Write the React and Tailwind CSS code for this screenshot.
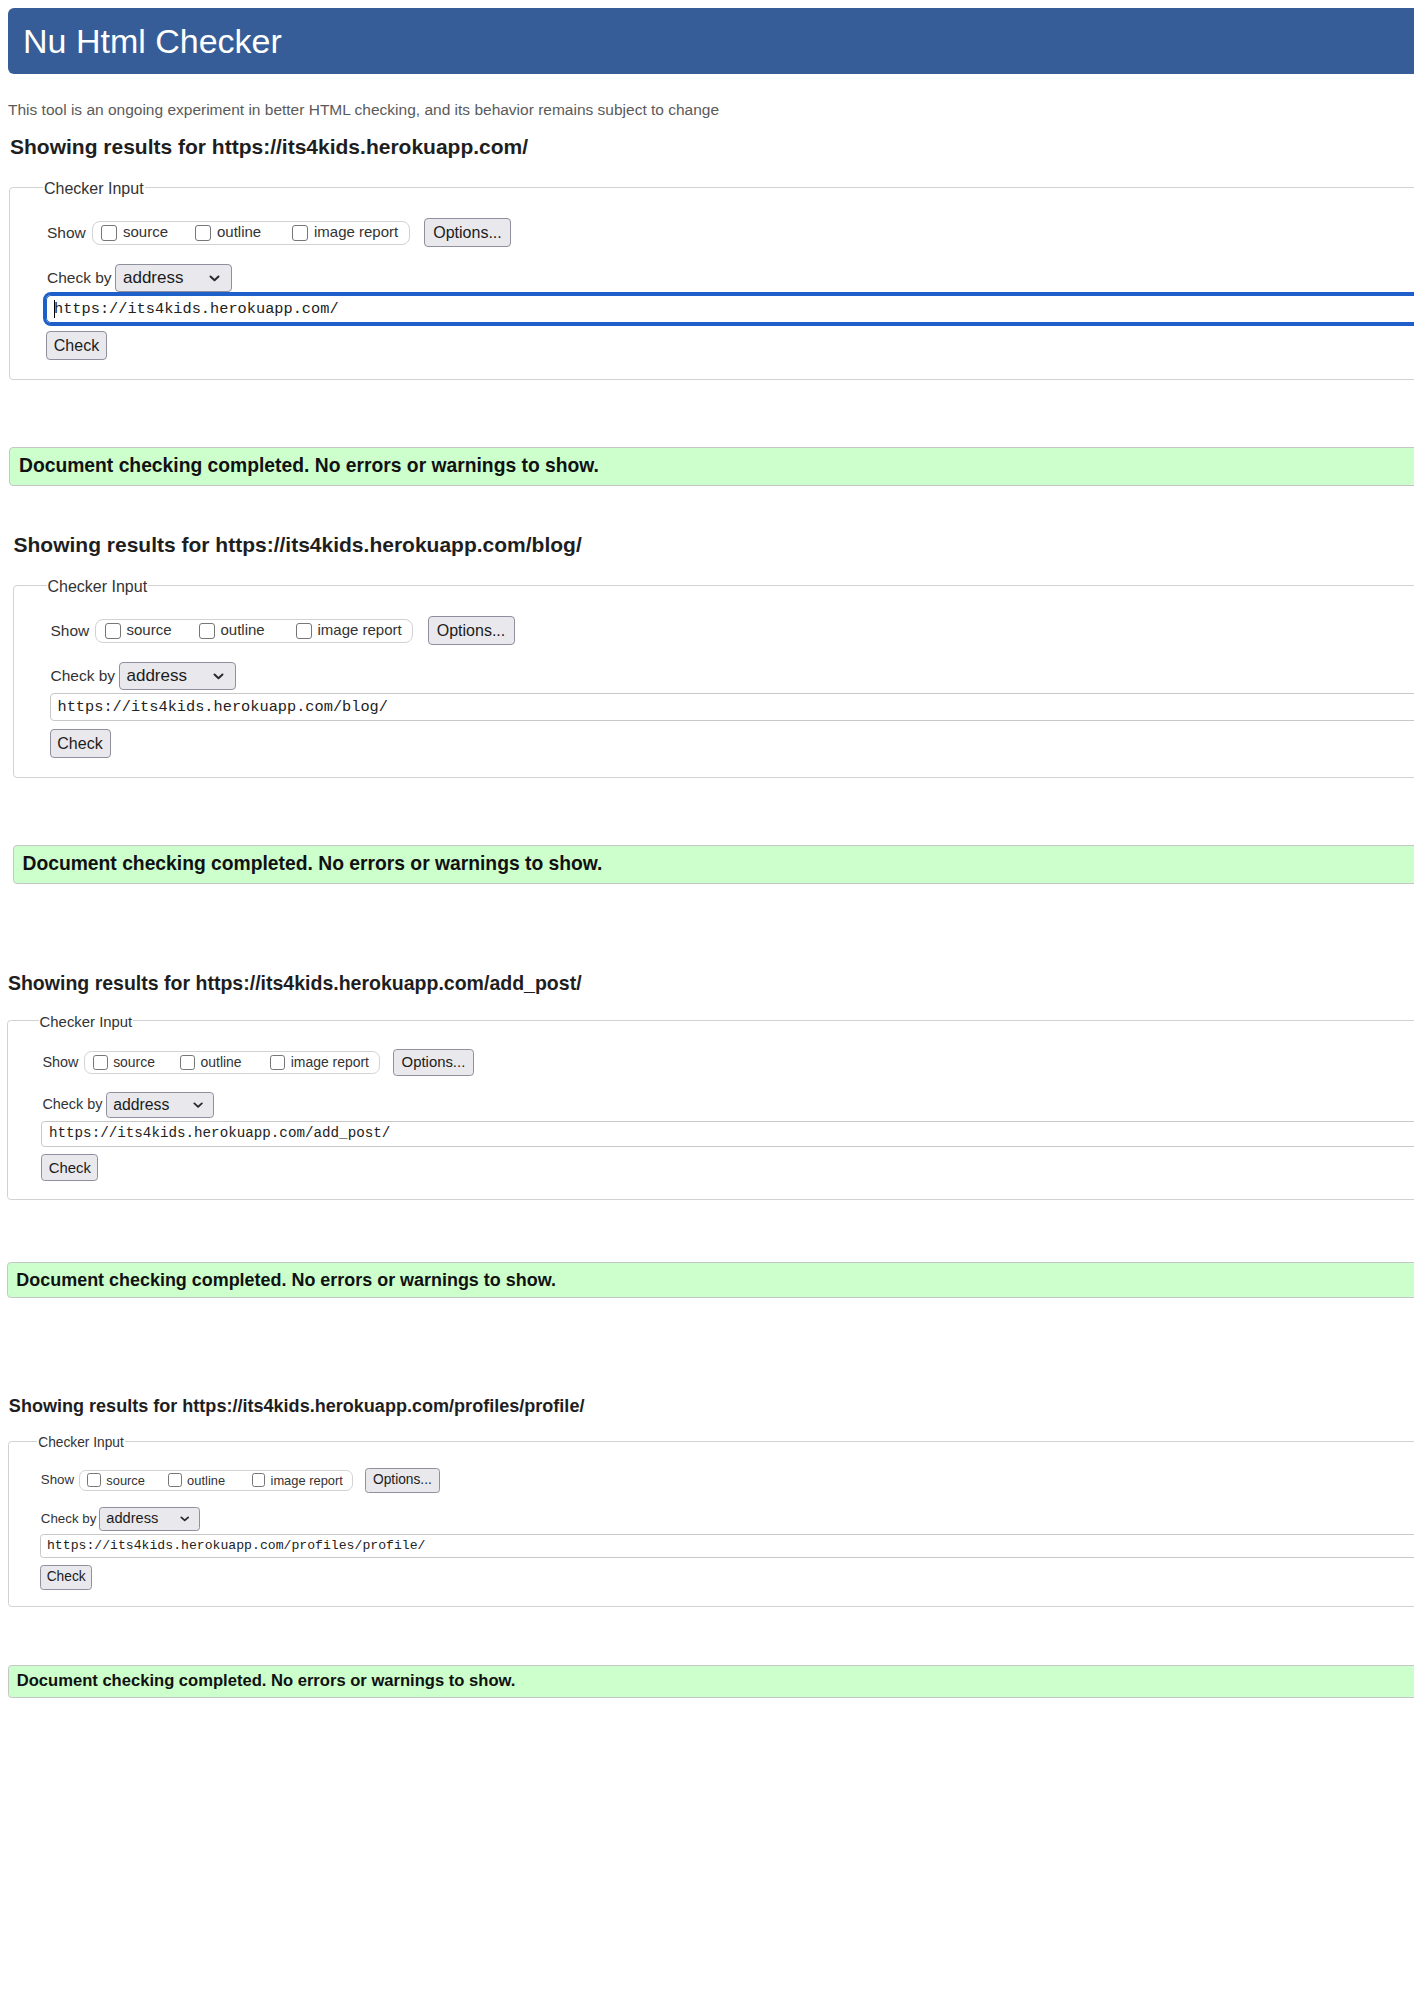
import React from "react";

const SANS = "font-['Liberation_Sans',Arial,sans-serif]";

function Box() {
  return (
    <span className="block h-[16px] w-[16px] shrink-0 rounded-[3px] border-[1.5px] border-[#767676] bg-white" />
  );
}

function Chevron() {
  return (
    <svg width="11" height="7" viewBox="0 0 11 7" className="shrink-0">
      <polyline points="1.5,1.5 5.5,5.2 9.5,1.5" fill="none" stroke="#2a2a2a" strokeWidth="2" strokeLinecap="round" strokeLinejoin="round" />
    </svg>
  );
}

function Checker({ url, focused }) {
  return (
    <fieldset className="w-[1800px] rounded-[4px] border border-[#d2d2d2] pb-[19px]">
      <legend className="ml-[33px] px-[1px] pt-[4px] text-[16px] leading-[18px] text-[#333]">Checker Input</legend>
      <div className="flex flex-col pl-[37px] pt-[20px]">
        <div className="flex h-[29px] items-center">
          <span className="w-[44.5px] text-[15.5px] text-[#333]">Show</span>
          <div className="flex h-[24px] w-[318px] items-center rounded-[8px] border border-[#d2d2d2] pl-[8.5px] text-[15px] text-[#333]">
            <label className="flex w-[94px] items-center gap-[6px]">
              <Box />
              source
            </label>
            <label className="flex w-[97px] items-center gap-[6px]">
              <Box />
              outline
            </label>
            <label className="flex items-center gap-[6px]">
              <Box />
              image report
            </label>
          </div>
          <button className="ml-[14.5px] flex h-[29px] w-[87px] items-center justify-center rounded-[4px] border border-[#8f8f9d] bg-[#e9e9ed] text-[16px] text-[#1b1b1b]">
            Options...
          </button>
        </div>
        <div className="mt-[17px] flex h-[28px] items-center">
          <span className="w-[68px] text-[15.5px] text-[#333]">Check by</span>
          <div className="flex h-[28px] w-[117px] items-center justify-between rounded-[4px] border border-[#8f8f9d] bg-[#e9e9ed] pl-[7px] pr-[11px] text-[17px] text-[#1b1b1b]">
            <span>address</span>
            <Chevron />
          </div>
        </div>
        {focused ? (
          <div className="mt-[3px] -ml-[1px] flex h-[28px] w-[1800px] items-center rounded-[5px] border border-[#1f5fc9] pl-[7px] outline-[3px] outline-solid outline-[#1f5fc9] font-['Liberation_Mono',monospace] text-[15.3px] text-[#222]">
            <span className="-mr-[1px] h-[18px] w-[1px] bg-black" />
            {url}
          </div>
        ) : (
          <div className="mt-[3px] -ml-[1px] flex h-[28px] w-[1800px] items-center rounded-[4px] border border-[#c8c8c8] pl-[7px] font-['Liberation_Mono',monospace] text-[15.3px] text-[#222]">
            {url}
          </div>
        )}
        <div className="mt-[8px] flex">
          <button className="-ml-[1px] flex h-[29px] w-[61px] items-center justify-center rounded-[4px] border border-[#8f8f9d] bg-[#e9e9ed] text-[16px] text-[#1b1b1b]">
            Check
          </button>
        </div>
      </div>
    </fieldset>
  );
}

function Section({ url, focused }) {
  return (
    <div>
      <h2 className="ml-[1px] text-[21px] font-bold leading-[24px] text-[#1e1e1e]">
        Showing results for {url}
      </h2>
      <div className="mt-[17px]">
        <Checker url={url} focused={focused} />
      </div>
      <div className="mt-[67px] flex h-[39px] w-[1800px] items-center rounded-[4px] border border-[#c6c6c6] bg-[#ccffcc] pl-[9px] text-[19.3px] font-bold text-[#111]">
        Document checking completed. No errors or warnings to show.
      </div>
    </div>
  );
}

export default function App() {
  return (
    <div className={`h-[2000px] w-[1414px] overflow-hidden bg-white ${SANS}`}>
      <header className="ml-[8px] mt-[8px] flex h-[66px] w-[1800px] items-center rounded-[6px] bg-[#365d97] pl-[15px]">
        <h1 className="text-[34px] leading-none text-white">Nu Html Checker</h1>
      </header>
      <p className="ml-[8px] mt-[26px] text-[15.5px] leading-[20px] text-[#5a5a5a]">
        This tool is an ongoing experiment in better HTML checking, and its behavior remains subject to change
      </p>
      <div className="ml-[9px] mt-[15px]">
        <Section url="https://its4kids.herokuapp.com/" focused />
      </div>
      <div className="ml-[12.5px] mt-[47px]">
        <Section url="https://its4kids.herokuapp.com/blog/" />
      </div>
      <div className="ml-[7px] mt-[88px]">
        <div className="[zoom:0.93]">
          <Section url="https://its4kids.herokuapp.com/add_post/" />
        </div>
      </div>
      <div className="ml-[8px] mt-[98px]">
        <div className="[zoom:0.86]">
          <Section url="https://its4kids.herokuapp.com/profiles/profile/" />
        </div>
      </div>
    </div>
  );
}
